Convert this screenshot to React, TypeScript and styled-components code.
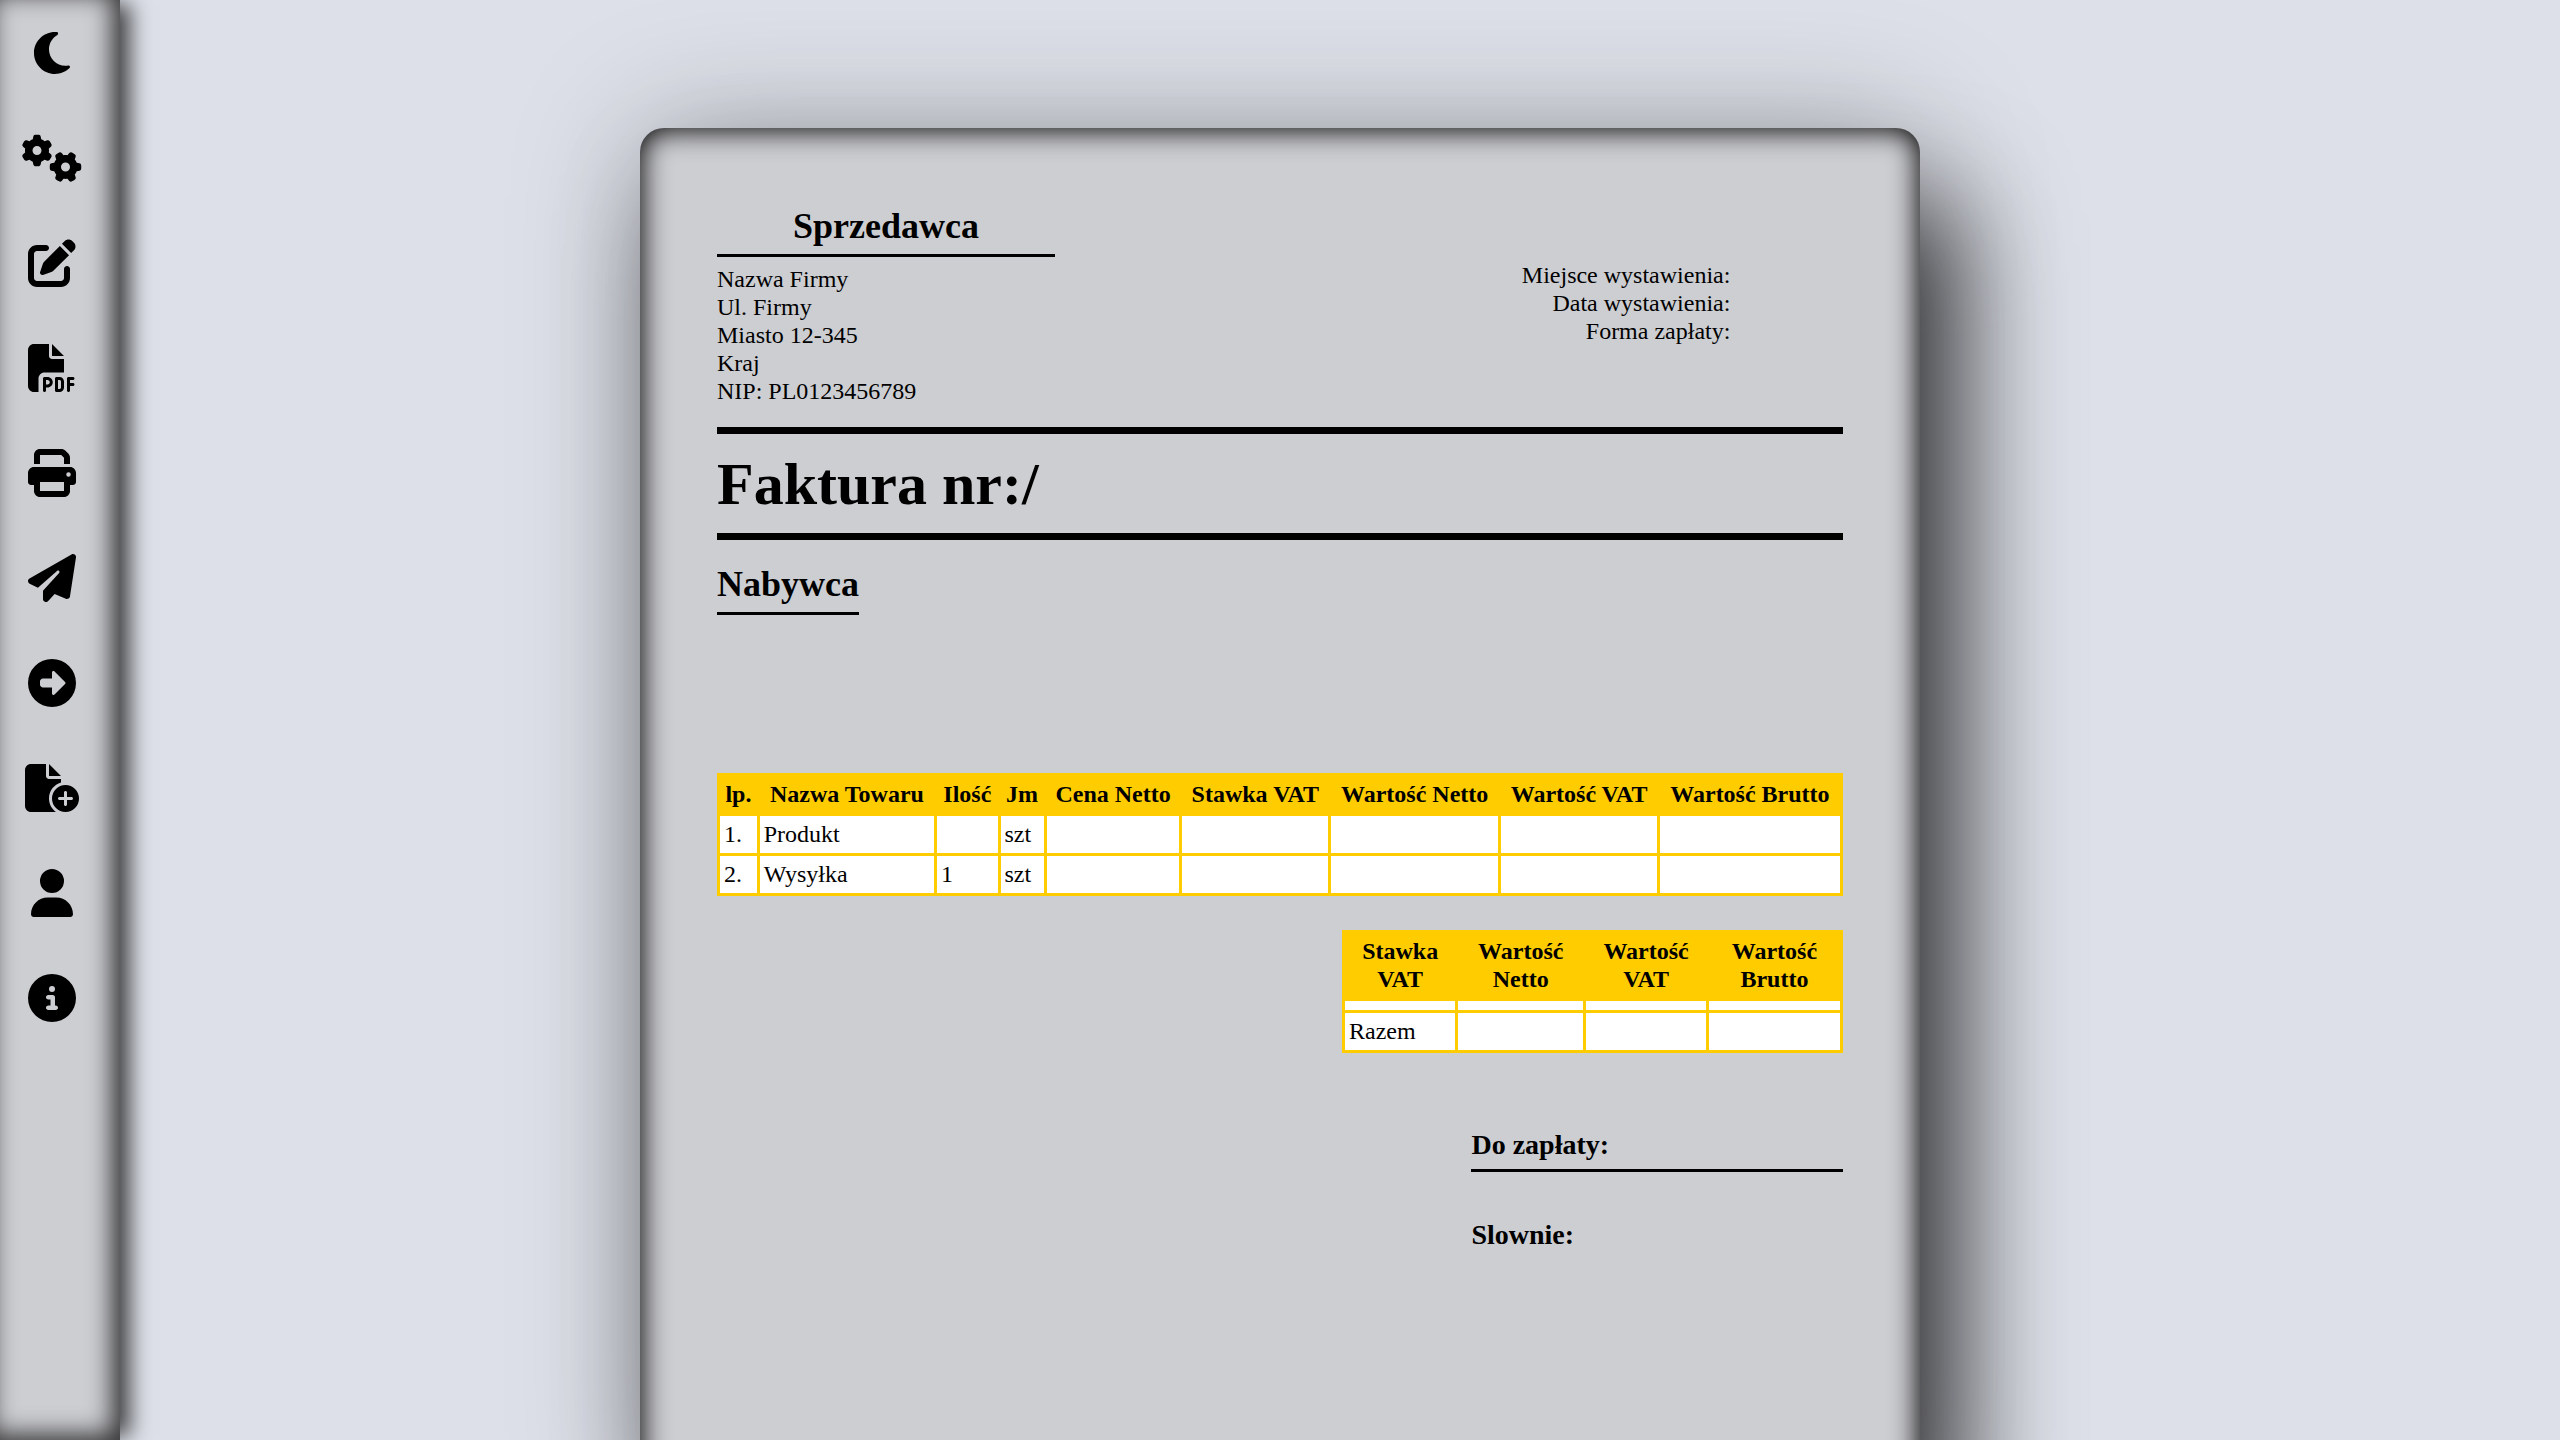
import React from "react";
import styled, { createGlobalStyle } from "styled-components";
import {
  FaMoon,
  FaGears,
  FaPenToSquare,
  FaFilePdf,
  FaPrint,
  FaPaperPlane,
  FaCircleRight,
  FaFileCirclePlus,
  FaUser,
  FaCircleInfo,
} from "react-icons/fa6";

const GlobalStyle = createGlobalStyle`
  *, *::before, *::after { box-sizing: border-box; }
  body {
    margin: 0;
    background: #dde0e8;
    color: #000;
    font: 24px/28px "Liberation Serif", "Times New Roman", serif;
  }
  h1, h2, h3, p { margin: 0; }
`;

const Layout = styled.div`
  display: flex;
  height: 100vh;
  overflow: hidden;
`;

const Sidebar = styled.nav`
  flex: none;
  width: 120px;
  padding-right: 16px;
  background: #cdced2;
  box-shadow:
    inset -8px -6px 24px rgba(0, 0, 0, 0.75),
    14px 0 20px -4px rgba(0, 0, 0, 0.7);
`;

const Tools = styled.ul`
  display: flex;
  flex-direction: column;
  margin: 0;
  padding: 0;
  list-style: none;
`;

const ToolButton = styled.button<{ $iconWidth: number }>`
  display: flex;
  align-items: center;
  justify-content: center;
  width: 100%;
  height: 105px;
  padding: 0;
  border: 0;
  background: none;
  color: #000;
  cursor: pointer;

  svg {
    width: ${(p) => p.$iconWidth}px;
    height: 48px;
  }
`;

const Main = styled.main`
  flex: 1;
  display: flex;
  justify-content: center;
  align-items: flex-start;
  padding: 128px 120px 0 0;
`;

const Paper = styled.article`
  flex: none;
  width: 50vw;
  min-height: 1370px;
  padding: 77px;
  border-radius: 24px;
  background: #cdced2;
  box-shadow:
    inset 0 0 28px 2px #000,
    0 0 130px rgba(0, 0, 0, 0.25),
    40px 75px 110px rgba(0, 0, 0, 0.72);
`;

const Top = styled.header`
  display: flex;
  justify-content: space-between;
  align-items: flex-start;
  padding-bottom: 22px;
`;

const Seller = styled.section`
  width: 30%;
`;

const PartyTitle = styled.h2`
  width: fit-content;
  margin-bottom: 8px;
  padding: 1px 0 7px;
  border-bottom: 3px solid #000;
  font-size: 36px;
  line-height: 41px;
`;

const SellerTitle = styled(PartyTitle)`
  width: 100%;
  text-align: center;
`;

const Meta = styled.div`
  width: 40%;
  padding: 56px 10% 0 0;
  text-align: right;
`;

const InvoiceTitle = styled.h1`
  padding: 16px 0 14px;
  border: solid #000;
  border-width: 7px 0;
  font-size: 60px;
  line-height: 69px;
`;

const Buyer = styled.section`
  min-height: 233px;
  padding-top: 23px;
`;

const Table = styled.table<{ $width: string }>`
  width: ${(p) => p.$width};
  margin: 0 0 34px auto;
  border-collapse: collapse;
  background: #fff;

  th, td {
    padding: 4px 4px 5px;
    border: 3px solid #fc0;
  }
  th { background: #fc0; }
`;

const Totals = styled.section`
  width: 33%;
  margin: 76px 0 0 auto;
`;

const Due = styled.h3`
  padding-bottom: 8px;
  border-bottom: 3px solid #000;
  font-size: 28px;
  line-height: 32px;
`;

const Words = styled.h3`
  margin-top: 47px;
  font-size: 28px;
  line-height: 32px;
`;

const tools = [
  { label: "Tryb ciemny", Icon: FaMoon, width: 48 },
  { label: "Ustawienia", Icon: FaGears, width: 60 },
  { label: "Edytuj", Icon: FaPenToSquare, width: 48 },
  { label: "Zapisz PDF", Icon: FaFilePdf, width: 48 },
  { label: "Drukuj", Icon: FaPrint, width: 48 },
  { label: "Wyślij", Icon: FaPaperPlane, width: 48 },
  { label: "Dalej", Icon: FaCircleRight, width: 48 },
  { label: "Nowa faktura", Icon: FaFileCirclePlus, width: 54 },
  { label: "Konto", Icon: FaUser, width: 48 },
  { label: "Informacje", Icon: FaCircleInfo, width: 48 },
];

const seller = ["Nazwa Firmy", "Ul. Firmy", "Miasto 12-345", "Kraj", "NIP: PL0123456789"];
const meta = ["Miejsce wystawienia:", "Data wystawienia:", "Forma zapłaty:"];
const itemHeads = [
  "lp.", "Nazwa Towaru", "Ilość", "Jm", "Cena Netto",
  "Stawka VAT", "Wartość Netto", "Wartość VAT", "Wartość Brutto",
];
const items = [
  ["1.", "Produkt", "", "szt", "", "", "", "", ""],
  ["2.", "Wysyłka", "1", "szt", "", "", "", "", ""],
];
const vatHeads = ["Stawka VAT", "Wartość Netto", "Wartość VAT", "Wartość Brutto"];
const vatRows = [["", "", "", ""], ["Razem", "", "", ""]];

function Grid({ width, heads, rows }: { width: string; heads: string[]; rows: string[][] }) {
  return (
    <Table $width={width}>
      <thead>
        <tr>{heads.map((h) => <th key={h} scope="col">{h}</th>)}</tr>
      </thead>
      <tbody>
        {rows.map((row, r) => (
          <tr key={r}>
            {row.map((cell, c) => <td key={c}>{cell}</td>)}
          </tr>
        ))}
      </tbody>
    </Table>
  );
}

export default function App() {
  return (
    <>
      <GlobalStyle />
      <Layout>
        <Sidebar>
          <Tools>
            {tools.map(({ label, Icon, width }) => (
              <li key={label}>
                <ToolButton type="button" aria-label={label} $iconWidth={width}>
                  <Icon />
                </ToolButton>
              </li>
            ))}
          </Tools>
        </Sidebar>
        <Main>
          <Paper>
            <Top>
              <Seller>
                <SellerTitle>Sprzedawca</SellerTitle>
                {seller.map((line) => <p key={line}>{line}</p>)}
              </Seller>
              <Meta>
                {meta.map((line) => <p key={line}>{line}</p>)}
              </Meta>
            </Top>
            <InvoiceTitle>Faktura nr:/</InvoiceTitle>
            <Buyer>
              <PartyTitle>Nabywca</PartyTitle>
            </Buyer>
            <Grid width="100%" heads={itemHeads} rows={items} />
            <Grid width="501px" heads={vatHeads} rows={vatRows} />
            <Totals>
              <Due>Do zapłaty:</Due>
              <Words>Slownie:</Words>
            </Totals>
          </Paper>
        </Main>
      </Layout>
    </>
  );
}
